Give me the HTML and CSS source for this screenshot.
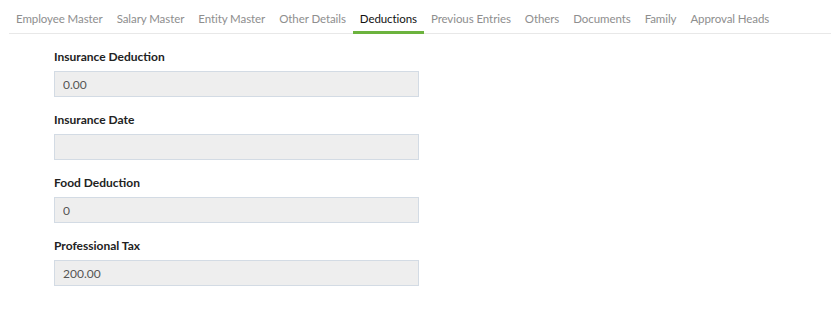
FILE: index.html
```html
<!DOCTYPE html>
<html lang="en">
<head>
    <meta charset="UTF-8">
    <title>Employee Deductions</title>
    <link rel="stylesheet" href="styles.css">
</head>
<body>
    <ul class="tabs">
        <li class="tab">Employee Master</li>
        <li class="tab">Salary Master</li>
        <li class="tab">Entity Master</li>
        <li class="tab">Other Details</li>
        <li class="tab active">Deductions</li>
        <li class="tab">Previous Entries</li>
        <li class="tab">Others</li>
        <li class="tab">Documents</li>
        <li class="tab">Family</li>
        <li class="tab">Approval Heads</li>
    </ul>

    <div class="tab-content">
        <div class="form-group">
            <label for="insuranceDeduction">Insurance Deduction</label>
            <input type="text" id="insuranceDeduction" value="0.00" readonly>
        </div>
        <div class="form-group">
            <label for="insuranceDate">Insurance Date</label>
            <input type="text" id="insuranceDate" value="" readonly>
        </div>
        <div class="form-group">
            <label for="foodDeduction">Food Deduction</label>
            <input type="text" id="foodDeduction" value="0" readonly>
        </div>
        <div class="form-group">
            <label for="professionalTax">Professional Tax</label>
            <input type="text" id="professionalTax" value="200.00" readonly>
        </div>
    </div>
</body>
</html>
```

FILE: styles.css
```css
:root {
    --tab-text: #8e8e8e;
    --active-text: #111111;
    --active-line: #6cb33e;
    --line-color: #e8e8e8;
    --input-bg: #eeeeee;
    --input-border: #d3dbe4;
}

* {
    margin: 0;
    padding: 0;
    box-sizing: border-box;
    font-family: 'Lato', 'Liberation Sans', sans-serif;
}

body {
    background-color: #ffffff;
    color: #333333;
}

.tabs {
    display: flex;
    list-style: none;
    margin-left: 9px;
    border-bottom: 1px solid var(--line-color);
}

.tab {
    padding: 10px 7px 3px;
    margin-bottom: -1px;
    line-height: 18px;
    font-size: 11.5px;
    letter-spacing: -0.08px;
    color: var(--tab-text);
    border-bottom: 3px solid transparent;
    cursor: pointer;
}

.tab.active {
    color: var(--active-text);
    border-bottom-color: var(--active-line);
}

.tab-content {
    padding: 14px 0 0 54px;
}

.form-group {
    margin-bottom: 14px;
}

label {
    display: block;
    line-height: 18px;
    margin-bottom: 5px;
    font-size: 12px;
    font-weight: bold;
    color: #222222;
}

input {
    display: block;
    width: 365px;
    height: 26px;
    padding: 0 8px;
    border: 1px solid var(--input-border);
    background-color: var(--input-bg);
    font-size: 12px;
    color: #555555;
    outline: none;
}
```
